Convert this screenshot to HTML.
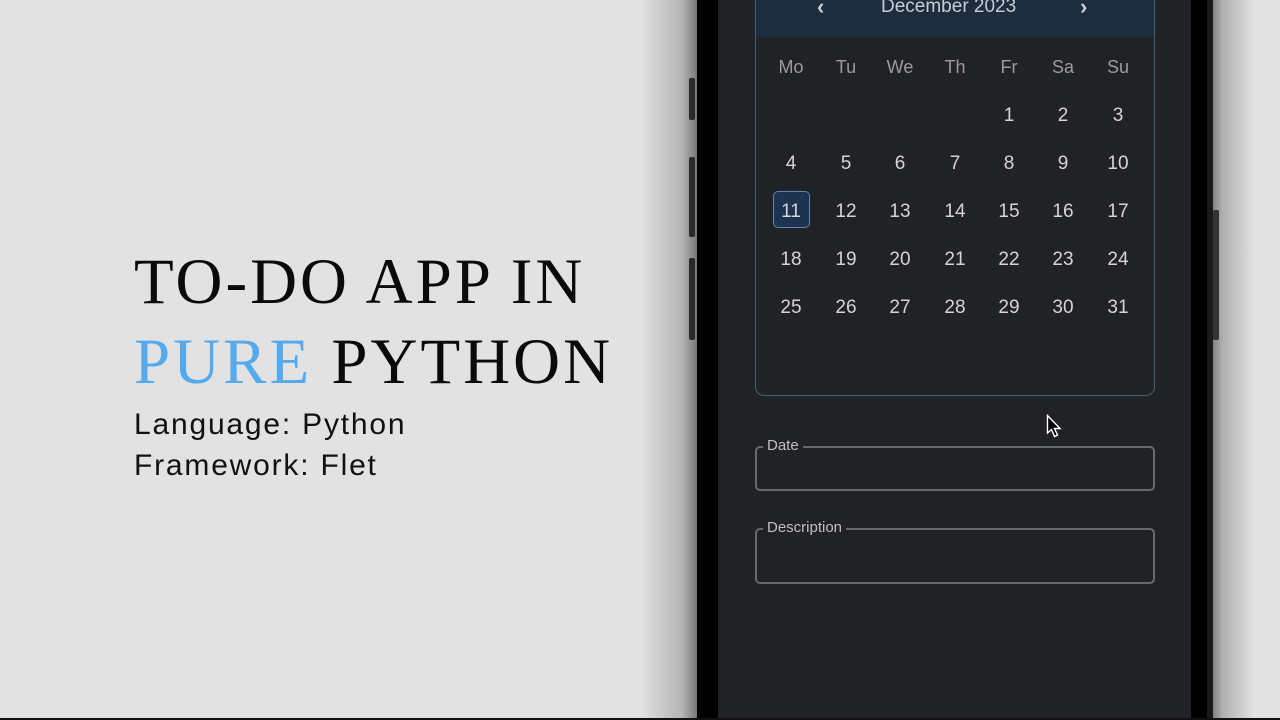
<!DOCTYPE html>
<html><head><meta charset="utf-8"><style>
*{margin:0;padding:0;box-sizing:border-box}
body{width:1280px;height:720px;overflow:hidden;background:#e2e2e2;position:relative;font-family:"Liberation Sans",sans-serif}
.abs{position:absolute}
.t{font-family:"Liberation Serif",serif;font-size:65px;letter-spacing:3px;color:#0a0a0a;white-space:nowrap;line-height:1}
.s{font-size:30px;letter-spacing:1.8px;color:#111;white-space:nowrap;line-height:1}
.cal{color:#d4d5d8;font-size:19px;text-align:center;width:40px;margin-left:-20px;line-height:1}
.wd{color:#9a9ca1;font-size:18px}
</style></head><body>
<div class="abs" style="left:640px;top:0;width:60px;height:720px;background:linear-gradient(90deg,#e2e2e2,#b5b5b5 70%,#6a6a6a)"></div>
<div class="abs" style="left:1205px;top:0;width:50px;height:720px;background:linear-gradient(90deg,#5a5a5a,#b0b0b0 35%,#e2e2e2)"></div>
<div class="abs" style="left:697px;top:0;width:512px;height:720px;background:#000"></div>
<div class="abs" style="left:1207px;top:0;width:6px;height:720px;background:#1a1a1a"></div>
<div class="abs" style="left:689px;top:78px;width:6px;height:42px;background:#2a2a2a;border-radius:2px"></div>
<div class="abs" style="left:689px;top:157px;width:6px;height:80px;background:#2a2a2a;border-radius:2px"></div>
<div class="abs" style="left:689px;top:258px;width:6px;height:82px;background:#2a2a2a;border-radius:2px"></div>
<div class="abs" style="left:1213px;top:210px;width:6px;height:130px;background:#333;border-radius:2px"></div>
<div class="abs" style="left:718px;top:0;width:473px;height:720px;background:#212226"></div>
<div class="abs" style="left:755px;top:-10px;width:400px;height:406px;border:1.5px solid #3e5f82;border-radius:9px;overflow:hidden">
<div style="height:46px;background:#1e2d3d"></div></div>
<div class="abs" style="left:881px;top:-3px;color:#c6ccd3;font-size:19px;line-height:20px">December 2023</div>
<div class="abs" style="left:817px;top:-6px;color:#c6ccd3;font-size:22px;font-weight:bold">‹</div>
<div class="abs" style="left:1080px;top:-6px;color:#c6ccd3;font-size:22px;font-weight:bold">›</div>
<div class="abs" style="left:773px;top:191px;width:37px;height:37px;background:#1d3450;border:1.5px solid #5a86b0;border-radius:5px"></div>
<div id="g"></div>
<div class="abs" style="left:755px;top:446px;width:400px;height:45px;border:2px solid #68696d;border-radius:5px"></div>
<div class="abs" style="left:763px;top:437px;background:#212226;padding:0 4px;color:#bfc0c3;font-size:15px">Date</div>
<div class="abs" style="left:755px;top:528px;width:400px;height:56px;border:2px solid #68696d;border-radius:5px"></div>
<div class="abs" style="left:763px;top:519px;background:#212226;padding:0 4px;color:#bfc0c3;font-size:15px">Description</div>
<svg class="abs" style="left:1046px;top:414px" width="18" height="26" viewBox="0 0 18 26"><path d="M1.5 1.5 L1.5 19 L5.5 15.5 L8.5 22.5 L11.5 21 L8.5 14.5 L14 14.5 Z" fill="#000" stroke="#fff" stroke-width="1.4"/></svg>
<div class="abs t" style="left:134px;top:250px">TO-DO APP IN</div>
<div class="abs t" style="left:134px;top:330px"><span style="color:#55aaee">PURE</span> PYTHON</div>
<div class="abs s" style="left:134px;top:410px">Language: Python</div>
<div class="abs s" style="left:134px;top:451px">Framework: Flet</div>
<div class="abs" style="left:0;top:718px;width:1280px;height:2px;background:#111"></div>
<script>
var cols=[791,846,900,955,1009,1063,1118],h='';
['Mo','Tu','We','Th','Fr','Sa','Su'].forEach(function(d,i){h+='<div class="abs cal wd" style="left:'+cols[i]+'px;top:58px">'+d+'</div>'});
for(var n=1;n<=31;n++){var p=n+3,r=Math.floor(p/7),c=p%7;h+='<div class="abs cal" style="left:'+cols[c]+'px;top:'+(106+r*48)+'px">'+n+'</div>'}
document.getElementById('g').innerHTML=h;
</script>
</body></html>
